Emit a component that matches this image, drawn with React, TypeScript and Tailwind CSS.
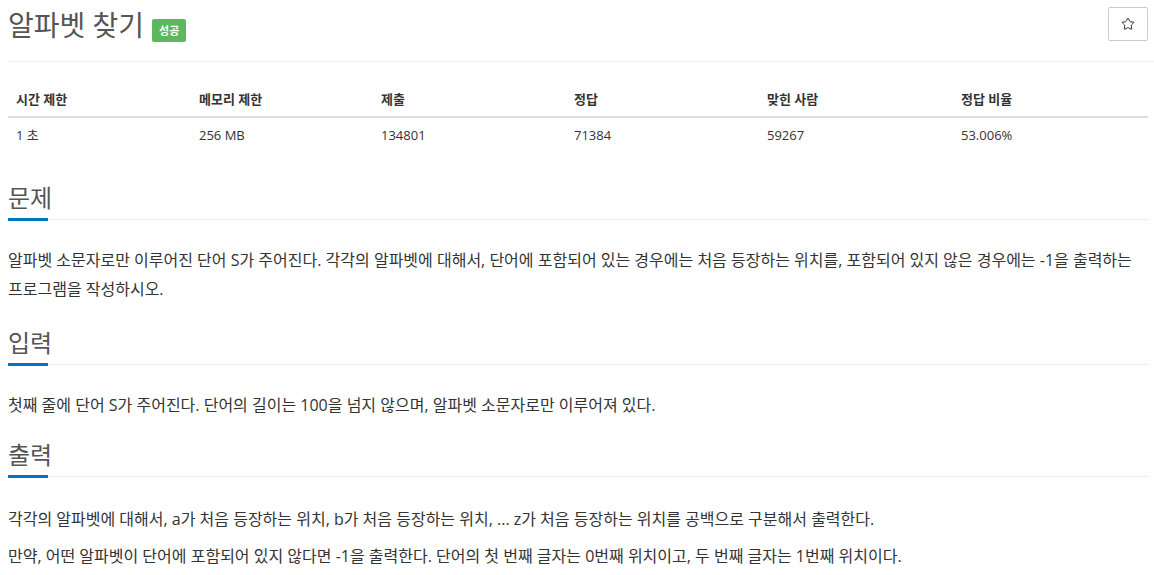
import React from "react";
import { Star } from "lucide-react";

const font = { fontFamily: "'Open Sans', 'Noto Sans CJK KR', sans-serif" };

function Heading({ children }: { children: React.ReactNode }) {
  return (
    <div>
      <h2 className="text-[24px] leading-[26px] text-[#555] font-normal">{children}</h2>
      <div className="mt-[7px] flex items-center">
        <div className="h-[3px] w-[40px] bg-[#0076c0]" />
        <div className="flex-1 border-t border-dotted border-[#ddd]" />
      </div>
    </div>
  );
}

export default function App() {
  const cols = ["시간 제한", "메모리 제한", "제출", "정답", "맞힌 사람", "정답 비율"];
  const vals = ["1 초", "256 MB", "134801", "71384", "59267", "53.006%"];
  return (
    <div className="w-[1154px] bg-white text-[#333] pl-[8px] pr-[6px]" style={font}>
      <div className="flex justify-between items-start pt-[7px]">
        <div className="flex items-center gap-[8px]">
          <h1 className="text-[28px] leading-[36px] text-[#555] font-normal">알파벳 찾기</h1>
          <span className="mt-[11px] bg-[#5cb85c] text-white text-[11px] font-bold leading-[23px] h-[23px] px-[7px] rounded-[2px]">성공</span>
        </div>
        <button className="w-[40px] h-[34px] border border-[#ccc] bg-white flex items-center justify-center rounded-[2px]">
          <Star size={14} strokeWidth={1.6} color="#222" />
        </button>
      </div>
      <div className="mt-[18px] h-px bg-[#eee] -mr-[6px]" />

      <div className="mt-[20px] text-[13px]">
        <div className="grid grid-cols-[183px_182px_193px_193px_194px_1fr] border-b-2 border-[#ddd]">
          {cols.map((c) => (
            <div key={c} className="px-[8px] py-[8px] leading-[18px] font-bold">{c}</div>
          ))}
        </div>
        <div className="grid grid-cols-[183px_182px_193px_193px_194px_1fr]">
          {vals.map((v) => (
            <div key={v} className="px-[8px] py-[8px] leading-[18px]">{v}</div>
          ))}
        </div>
      </div>

      <div className="mt-[33px]">
        <Heading>문제</Heading>
        <div className="mt-[25px] text-[16px] leading-[29px]">
          <p>
            알파벳 소문자로만 이루어진 단어 S가 주어진다. 각각의 알파벳에 대해서, 단어에 포함되어 있는 경우에는 처음 등장하는 위치를, 포함되어 있지 않은 경우에는 -1을 출력하는
            <br />
            프로그램을 작성하시오.
          </p>
        </div>
      </div>

      <div className="mt-[26px]">
        <Heading>입력</Heading>
        <div className="mt-[25px] text-[16px] leading-[29px]">
          <p>첫째 줄에 단어 S가 주어진다. 단어의 길이는 100을 넘지 않으며, 알파벳 소문자로만 이루어져 있다.</p>
        </div>
      </div>

      <div className="mt-[22px]">
        <Heading>출력</Heading>
        <div className="mt-[27px] text-[16px] leading-[29px]">
          <p className="mb-[8px]">각각의 알파벳에 대해서, a가 처음 등장하는 위치, b가 처음 등장하는 위치, ... z가 처음 등장하는 위치를 공백으로 구분해서 출력한다.</p>
          <p>만약, 어떤 알파벳이 단어에 포함되어 있지 않다면 -1을 출력한다. 단어의 첫 번째 글자는 0번째 위치이고, 두 번째 글자는 1번째 위치이다.</p>
        </div>
      </div>
    </div>
  );
}
